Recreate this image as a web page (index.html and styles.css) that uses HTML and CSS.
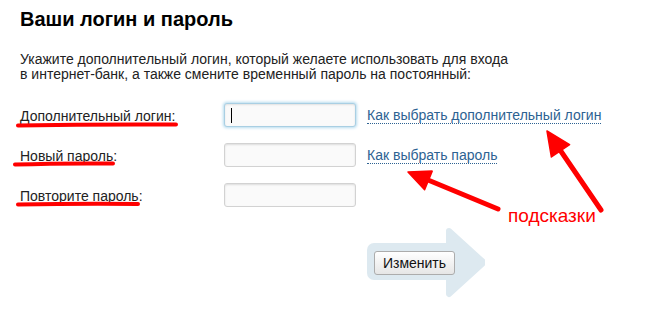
FILE: index.html
```html
<!DOCTYPE html>
<html lang="ru">
<head>
<meta charset="utf-8">
<title>Ваши логин и пароль</title>
<link rel="stylesheet" href="styles.css">
</head>
<body>
<div class="page">
  <h1 class="title">Ваши логин и пароль</h1>
  <p class="intro">Укажите дополнительный логин, который желаете использовать для входа<br>в интернет-банк, а также смените временный пароль на постоянный:</p>
  <form class="form">
    <div class="row">
      <label class="label">Дополнительный логин:</label>
      <span class="field focused"><input class="input" type="text"><span class="caret"></span></span>
      <a class="hint" href="#">Как выбрать дополнительный логин</a>
    </div>
    <div class="row">
      <label class="label">Новый пароль:</label>
      <span class="field"><input class="input" type="password"></span>
      <a class="hint" href="#">Как выбрать пароль</a>
    </div>
    <div class="row">
      <label class="label">Повторите пароль:</label>
      <span class="field"><input class="input" type="password"></span>
    </div>
    <div class="submit">
      <svg class="submit-bg" width="118" height="71" viewBox="0 0 118 71">
        <rect x="0" y="16" width="86" height="37" rx="7" fill="#dde9f0"/>
        <path d="M82 4 L115 34 Q117 35.5 115 37 L82 67 Z" fill="#dde9f0" stroke="#dde9f0" stroke-width="6" stroke-linejoin="round"/>
      </svg>
      <button class="btn" type="button">Изменить</button>
    </div>
  </form>
  <div class="note">подсказки</div>
</div>
<svg class="marks" width="646" height="309" viewBox="0 0 646 309">
  <g stroke="#ff0000" stroke-width="4" stroke-linecap="round" fill="none">
    <path d="M18 125.5 Q 95 124 176 124.5"/>
    <path d="M15 164.5 Q 60 163 113 163.5"/>
    <path d="M18 204.5 Q 78 203.5 138 204"/>
    <path d="M601 210 L556 144" stroke-width="5"/>
    <path d="M498 209 L422 177.5" stroke-width="5"/>
  </g>
  <g fill="#ff0000" stroke="#ff0000" stroke-width="1.5" stroke-linejoin="round">
    <path d="M547 131 L551.4 157 L569.6 144.6 Z"/>
    <path d="M408 172 L424.6 189.7 L432.2 171.1 Z"/>
  </g>
</svg>
</body>
</html>
```

FILE: styles.css
```css
html, body {
  margin: 0;
  padding: 0;
  background: #ffffff;
}

body {
  position: relative;
  width: 646px;
  height: 309px;
  overflow: hidden;
  font-family: "Liberation Sans", Arial, sans-serif;
  font-size: 14px;
  color: #222222;
}

.page {
  padding: 8px 20px 0 20px;
  position: relative;
}

.title {
  margin: 0;
  font-size: 20px;
  font-weight: bold;
  line-height: 23px;
  color: #000000;
}

.intro {
  margin: 21px 0 0 0;
  line-height: 15px;
  color: #222222;
}

.form {
  margin: 21px 0 0 0;
  display: flex;
  flex-direction: column;
  gap: 16px;
}

.row {
  display: flex;
  align-items: flex-start;
  height: 24px;
}

.label {
  width: 204px;
  flex: none;
  padding-top: 5px;
  line-height: 16px;
  color: #222222;
}

.field {
  position: relative;
  display: block;
  width: 132px;
  height: 24px;
  flex: none;
}

.input {
  box-sizing: border-box;
  width: 132px;
  height: 24px;
  margin: 0;
  padding: 2px 6px;
  border: 1px solid #d2d2d2;
  border-radius: 3px;
  background: #fafafa;
  box-shadow: inset 0 1px 2px rgba(0, 0, 0, 0.12);
  font-family: "Liberation Sans", Arial, sans-serif;
  font-size: 14px;
  outline: none;
}

.focused .input {
  border-color: #a9cfe3;
  box-shadow: 0 0 3px 1px #b7dcef, inset 0 1px 2px rgba(0, 0, 0, 0.1);
}

.caret {
  position: absolute;
  left: 7px;
  top: 5px;
  width: 1px;
  height: 15px;
  background: #000000;
}

.hint {
  margin-left: 11px;
  margin-top: 4px;
  line-height: 16px;
  color: #2d6292;
  text-decoration: none;
  border-bottom: 1px dotted #2d6292;
}

.submit {
  position: relative;
  width: 118px;
  height: 71px;
  margin: 4px 0 0 347px;
  padding: 24px 0 0 7px;
  box-sizing: border-box;
}

.submit-bg {
  position: absolute;
  left: 0;
  top: 0;
}

.btn {
  position: relative;
  box-sizing: border-box;
  width: 81px;
  height: 24px;
  margin: 0;
  padding: 0;
  border: 1px solid #acacac;
  border-radius: 3px;
  background: linear-gradient(#ffffff, #e6e6e6);
  font-family: "Liberation Sans", Arial, sans-serif;
  font-size: 14px;
  color: #111111;
}

.note {
  position: absolute;
  left: 508px;
  top: 205px;
  font-size: 19px;
  line-height: 22px;
  color: #ff0000;
}

.marks {
  position: absolute;
  left: 0;
  top: 0;
  pointer-events: none;
}
```
